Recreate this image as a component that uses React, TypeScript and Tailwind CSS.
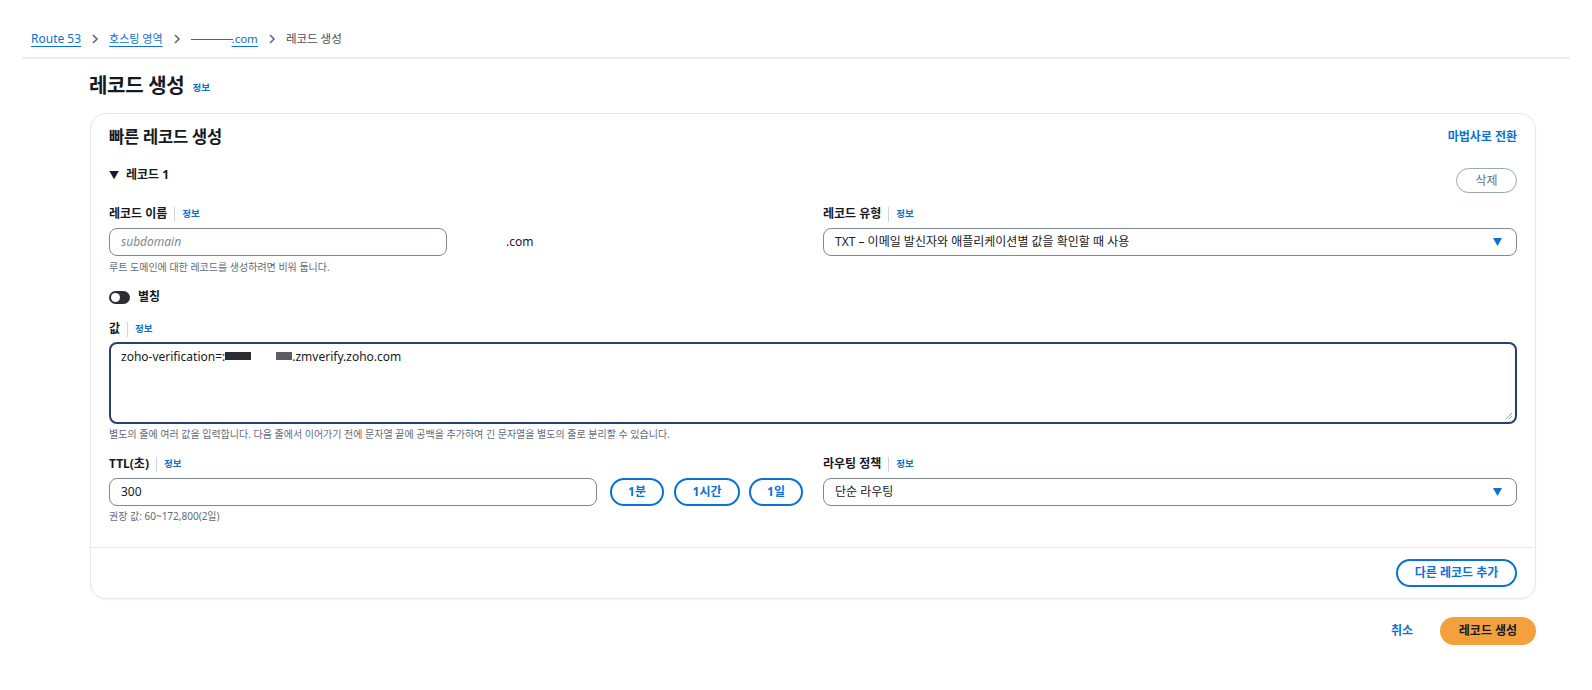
import type { ReactNode } from 'react';

const BLUE = 'text-[#0972d3]';

function Chevron() {
  return (
    <svg width="10" height="10" viewBox="0 0 10 10" className="mx-[9px] text-[#5f6b7a]">
      <polyline points="3,1 7,5 3,9" fill="none" stroke="currentColor" strokeWidth="1.6" />
    </svg>
  );
}

function Caret() {
  return (
    <svg width="9" height="8" viewBox="0 0 9 8" className="text-[#0972d3]">
      <polygon points="0,0 9,0 4.5,8" fill="currentColor" />
    </svg>
  );
}

function Label({ children }: { children: ReactNode }) {
  return (
    <div className="flex h-[16px] items-center text-[12px] font-bold text-[#16191f]">
      <span>{children}</span>
      <span className="mx-[7px] h-[15px] w-px bg-[#d1d5db]" />
      <span className={`text-[9.5px] font-bold ${BLUE}`}>정보</span>
    </div>
  );
}

function Help({ children, className = '' }: { children: ReactNode; className?: string }) {
  return <div className={`h-[14px] text-[10px] leading-[14px] text-[#5f6b7a] ${className}`}>{children}</div>;
}

function Select({ value }: { value: string }) {
  return (
    <div className="mt-[6px] flex h-[28px] items-center justify-between rounded-[8px] border border-[#7d8998] pl-[11px] pr-[14px] text-[12px] text-[#16191f]">
      <span>{value}</span>
      <Caret />
    </div>
  );
}

function PillButton({ children, className = '' }: { children: ReactNode; className?: string }) {
  return (
    <button
      className={`flex h-[28px] items-center justify-center rounded-full border-2 border-[#0972d3] text-[12px] font-bold ${BLUE} ${className}`}
    >
      {children}
    </button>
  );
}

export default function App() {
  return (
    <div className="min-h-screen bg-white font-['Noto_Sans','Noto_Sans_CJK_KR',sans-serif] text-[#16191f]">
      {/* breadcrumb */}
      <div className="mt-[30px] flex h-[18px] items-center pl-[31px] text-[11px]">
        <a className={`${BLUE} text-[12px] underline underline-offset-[3px]`}>Route 53</a>
        <Chevron />
        <a className={`${BLUE} underline underline-offset-[3px]`}>호스팅 영역</a>
        <Chevron />
        <a className={`${BLUE} text-[11.5px] underline underline-offset-[3px]`}>
          <span className="mr-[-1px] inline-block w-[42px] translate-y-[-3px] border-b border-[#0972d3]" />
          .com
        </a>
        <Chevron />
        <span className="text-[11.5px] text-[#414d5c]">레코드 생성</span>
      </div>
      <div className="mx-[22px] mt-[9px] h-[2px] bg-[#eceff2]" />

      <div className="pl-[90px] pr-[56px]">
        {/* title */}
        <div className="-ml-[1px] mt-[14px] flex h-[26px] items-center">
          <h1 className="text-[20px] font-bold tracking-[-0.3px]">레코드 생성</h1>
          <span className={`ml-[8px] mt-[5px] text-[9.5px] font-bold ${BLUE}`}>정보</span>
        </div>

        {/* card */}
        <div className="mt-[14px] rounded-[16px] border border-[#e5e7eb] shadow-[0_1px_2px_rgba(0,7,22,0.06)]">
          <div className="px-[18px] pb-[24px] pt-[13px]">
            <div className="flex h-[20px] items-center justify-between">
              <h2 className="text-[16.5px] font-bold tracking-[-0.2px]">빠른 레코드 생성</h2>
              <span className={`text-[12px] font-bold ${BLUE}`}>마법사로 전환</span>
            </div>

            <div className="mt-[20px] flex items-start justify-between">
              <div className="flex h-[16px] items-center text-[12px] font-bold">
                <span className="mr-[7px] text-[10px]">▼</span>레코드 1
              </div>
              <button className="mt-[1px] flex h-[25px] w-[61px] items-center justify-center rounded-full border border-[#9ba7b6] text-[12px] text-[#6b7280]">
                삭제
              </button>
            </div>

            <div className="mt-[13px] grid grid-cols-2 gap-x-[20px]">
              <div>
                <Label>레코드 이름</Label>
                <div className="mt-[6px] flex items-center">
                  <div className="flex h-[28px] w-[338px] items-center rounded-[8px] border border-[#7d8998] pl-[11px] text-[12px] italic text-[#7d8998]">
                    subdomain
                  </div>
                  <span className="ml-[59px] text-[12px]">.com</span>
                </div>
                <Help className="mt-[4px]">루트 도메인에 대한 레코드를 생성하려면 비워 둡니다.</Help>
              </div>
              <div>
                <Label>레코드 유형</Label>
                <Select value="TXT – 이메일 발신자와 애플리케이션별 값을 확인할 때 사용" />
              </div>
            </div>

            <div className="mt-[15px] flex h-[16px] items-center">
              <div className="flex h-[13px] w-[21px] items-center rounded-full bg-[#2a2e33] pl-[2px]">
                <div className="h-[9px] w-[9px] rounded-full bg-white" />
              </div>
              <span className="ml-[8px] text-[12px] font-bold">별칭</span>
            </div>

            <div className="mt-[16px]">
              <Label>값</Label>
              <div className="relative mt-[5px] h-[82px] rounded-[8px] border-2 border-[#27426f] px-[10px] pt-[4px] text-[12px]">
                <div className="flex items-start">
                  <span>zoho-verification=:</span>
                  <span className="mt-[4px] h-[8px] w-[26px] bg-[#2b2d31]" />
                  <span className="ml-[25px] mt-[4px] h-[8px] w-[16px] bg-[#5b5e63]" />
                  <span>.zmverify.zoho.com</span>
                </div>
                <svg width="8" height="8" viewBox="0 0 8 8" className="absolute bottom-[2px] right-[2px] text-[#9aa0a6]">
                  <line x1="1" y1="7" x2="7" y2="1" stroke="currentColor" strokeWidth="1" />
                  <line x1="4" y1="7" x2="7" y2="4" stroke="currentColor" strokeWidth="1" />
                </svg>
              </div>
              <Help className="mt-[3px]">
                별도의 줄에 여러 값을 입력합니다. 다음 줄에서 이어가기 전에 문자열 끝에 공백을 추가하여 긴 문자열을 별도의 줄로 분리할 수 있습니다.
              </Help>
            </div>

            <div className="mt-[15px] grid grid-cols-2 gap-x-[20px]">
              <div>
                <Label>TTL(초)</Label>
                <div className="mt-[6px] flex items-center">
                  <div className="flex h-[28px] flex-1 items-center rounded-[8px] border border-[#7d8998] pl-[11px] text-[12px]">
                    300
                  </div>
                  <PillButton className="ml-[13px] w-[54px]">1분</PillButton>
                  <PillButton className="ml-[10px] w-[66px]">1시간</PillButton>
                  <PillButton className="ml-[9px] w-[54px]">1일</PillButton>
                </div>
                <Help className="mt-[3px]">권장 값: 60~172,800(2일)</Help>
              </div>
              <div>
                <Label>라우팅 정책</Label>
                <Select value="단순 라우팅" />
              </div>
            </div>
          </div>

          <div className="flex justify-end border-t border-[#e5e7eb] px-[18px] py-[11px]">
            <PillButton className="h-[27px] w-[121px]">다른 레코드 추가</PillButton>
          </div>
        </div>

        {/* footer */}
        <div className="mt-[18px] flex items-center justify-end">
          <span className={`text-[12px] font-bold ${BLUE}`}>취소</span>
          <button className="ml-[27px] flex h-[28px] w-[96px] items-center justify-center rounded-full bg-[#f2a13c] text-[12px] font-bold text-[#16191f]">
            레코드 생성
          </button>
        </div>
      </div>
    </div>
  );
}
